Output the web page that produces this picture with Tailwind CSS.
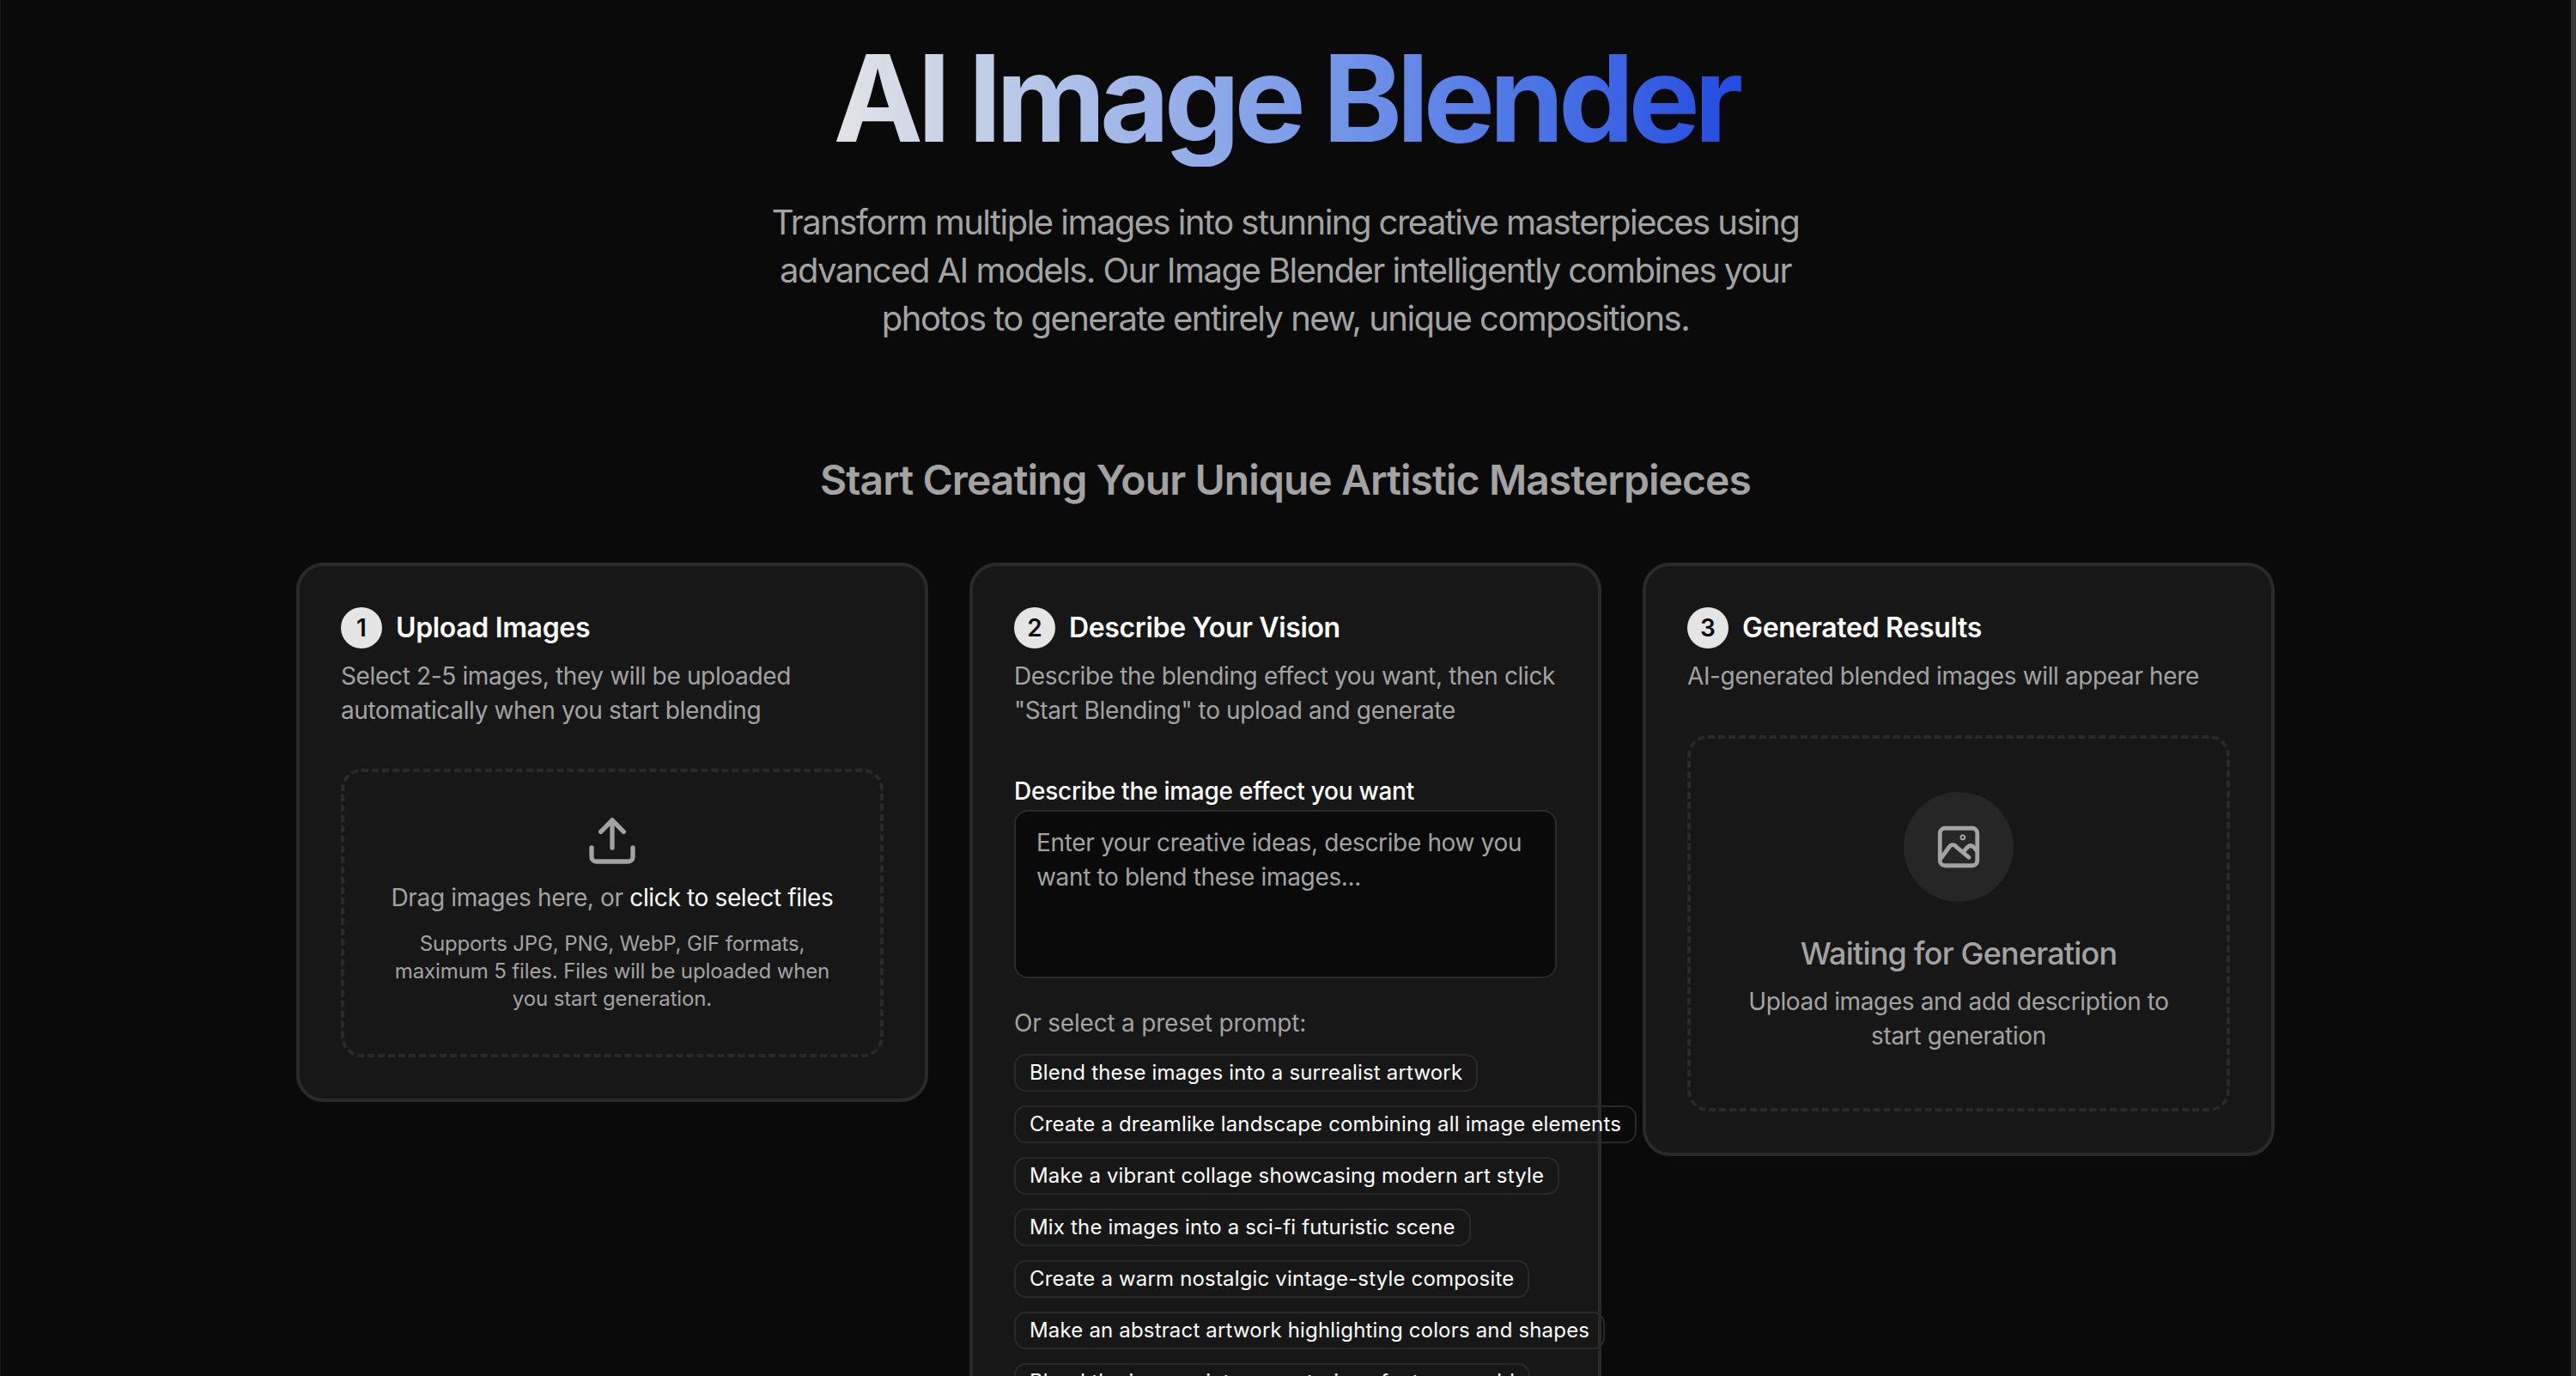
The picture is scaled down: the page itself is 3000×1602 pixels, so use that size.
<!DOCTYPE html>
<html lang="en">
<head>
  <meta charset="UTF-8">
  <title>AI Image Blender</title>
  <script src="https://cdn.jsdelivr.net/npm/@tailwindcss/browser@4"></script>
</head>
<body class="bg-[#0a0a0a] text-white font-['Inter',sans-serif] h-screen overflow-hidden">
  <div class="flex h-[1602px]">
    <main class="flex-1 shadow-[inset_1px_0_0_#1a1a1a] flex flex-col items-center overflow-hidden">
      <!-- Hero -->
      <h1 class="mt-[34px] px-[10px] text-[140px] leading-[160px] font-bold tracking-[-6.7px] bg-gradient-to-r from-[#e5e5e5] to-[#2449e0] bg-clip-text text-transparent">AI Image Blender</h1>
      <p class="mt-[37px] w-[1280px] text-center text-[40px] leading-[56px] tracking-[-1.55px] text-[#a3a3a3]">Transform multiple images into stunning creative masterpieces using advanced AI models. Our Image Blender intelligently combines your photos to generate entirely new, unique compositions.</p>
      <h2 class="mt-[132px] text-[48px] leading-[56px] font-semibold tracking-[-0.93px] text-[#a3a3a3]">Start Creating Your Unique Artistic Masterpieces</h2>

      <!-- Steps -->
      <div class="mt-[68px] w-[2304px] grid grid-cols-3 gap-[48px] items-start">
        <!-- Step 1 -->
        <section class="bg-[#171717] border-4 border-[#2a2a2a] rounded-[32px] p-[48px]">
          <div class="flex items-center gap-[16px]">
            <span class="w-[48px] h-[48px] rounded-full bg-[#e5e5e5] text-[#0a0a0a] text-[28px] font-semibold flex items-center justify-center">1</span>
            <h3 class="text-[32px] leading-[48px] font-semibold tracking-[-0.35px]">Upload Images</h3>
          </div>
          <p class="mt-[12px] text-[28px] leading-[40px] tracking-[-0.35px] text-[#a3a3a3]">Select 2-5 images, they will be uploaded automatically when you start blending</p>
          <div class="mt-[48px] border-4 border-dashed border-[#2a2a2a] rounded-[24px] h-[336px] flex flex-col items-center pt-[48px] px-[40px] text-center">
            <svg class="w-[64px] h-[64px] text-[#a3a3a3]" viewBox="0 0 24 24" fill="none" stroke="currentColor" stroke-width="2" stroke-linecap="round" stroke-linejoin="round"><path d="M21 15v4a2 2 0 0 1-2 2H5a2 2 0 0 1-2-2v-4"/><path d="M17 8l-5-5-5 5"/><path d="M12 3v12"/></svg>
            <p class="mt-[14px] text-[28px] leading-[40px] tracking-[-0.35px] text-[#a3a3a3]">Drag images here, or <span class="text-white">click to select files</span></p>
            <p class="mt-[18px] text-[24px] leading-[32px] tracking-[-0.13px] text-[#a3a3a3]">Supports JPG, PNG, WebP, GIF formats, maximum 5 files. Files will be uploaded when you start generation.</p>
          </div>
        </section>

        <!-- Step 2 -->
        <section class="bg-[#171717] border-4 border-[#2a2a2a] rounded-[32px] p-[48px]">
          <div class="flex items-center gap-[16px]">
            <span class="w-[48px] h-[48px] rounded-full bg-[#e5e5e5] text-[#0a0a0a] text-[28px] font-semibold flex items-center justify-center">2</span>
            <h3 class="text-[32px] leading-[48px] font-semibold tracking-[-0.35px]">Describe Your Vision</h3>
          </div>
          <p class="mt-[12px] text-[28px] leading-[40px] tracking-[-0.35px] text-[#a3a3a3]">Describe the blending effect you want, then click "Start Blending" to upload and generate</p>
          <label class="block mt-[54px] text-[28px] leading-[40px] font-medium tracking-[-0.25px]">Describe the image effect you want</label>
          <div class="mt-[2px] h-[196px] bg-[#0a0a0a] border-2 border-[#2a2a2a] rounded-[16px] px-[24px] pt-[16px] text-[28px] leading-[40px] tracking-[-0.35px] text-[#a3a3a3]">Enter your creative ideas, describe how you want to blend these images...</div>
          <p class="mt-[32px] text-[28px] leading-[40px] tracking-[-0.2px] text-[#a3a3a3]">Or select a preset prompt:</p>
          <div class="mt-[16px] flex flex-col items-start gap-[16px]">
            <button class="h-[44px] px-[16px] whitespace-nowrap border-2 border-[#2a2a2a] rounded-[14px] text-[24px] tracking-[0.17px]">Blend these images into a surrealist artwork</button>
            <button class="h-[44px] px-[16px] whitespace-nowrap border-2 border-[#2a2a2a] rounded-[14px] text-[24px] tracking-[0.17px]">Create a dreamlike landscape combining all image elements</button>
            <button class="h-[44px] px-[16px] whitespace-nowrap border-2 border-[#2a2a2a] rounded-[14px] text-[24px] tracking-[0.17px]">Make a vibrant collage showcasing modern art style</button>
            <button class="h-[44px] px-[16px] whitespace-nowrap border-2 border-[#2a2a2a] rounded-[14px] text-[24px] tracking-[0.17px]">Mix the images into a sci-fi futuristic scene</button>
            <button class="h-[44px] px-[16px] whitespace-nowrap border-2 border-[#2a2a2a] rounded-[14px] text-[24px] tracking-[0.17px]">Create a warm nostalgic vintage-style composite</button>
            <button class="h-[44px] px-[16px] whitespace-nowrap border-2 border-[#2a2a2a] rounded-[14px] text-[24px] tracking-[0.17px]">Make an abstract artwork highlighting colors and shapes</button>
            <button class="h-[44px] px-[16px] whitespace-nowrap border-2 border-[#2a2a2a] rounded-[14px] text-[24px] tracking-[0.17px]">Blend the images into a mysterious fantasy world</button>
          </div>
        </section>

        <!-- Step 3 -->
        <section class="bg-[#171717] border-4 border-[#2a2a2a] rounded-[32px] p-[48px]">
          <div class="flex items-center gap-[16px]">
            <span class="w-[48px] h-[48px] rounded-full bg-[#e5e5e5] text-[#0a0a0a] text-[28px] font-semibold flex items-center justify-center">3</span>
            <h3 class="text-[32px] leading-[48px] font-semibold tracking-[-0.3px]">Generated Results</h3>
          </div>
          <p class="mt-[12px] text-[28px] leading-[40px] tracking-[-0.37px] text-[#a3a3a3]">AI-generated blended images will appear here</p>
          <div class="mt-[49px] border-4 border-dashed border-[#2a2a2a] rounded-[24px] h-[438px] flex flex-col items-center pt-[62px] px-[48px] text-center">
            <div class="w-[128px] h-[128px] rounded-full bg-[#262626] flex items-center justify-center">
              <svg class="w-[58px] h-[58px] text-[#a3a3a3]" viewBox="0 0 24 24" fill="none" stroke="currentColor" stroke-width="2" stroke-linecap="round" stroke-linejoin="round"><rect x="3" y="3" width="18" height="18" rx="2.5"/><circle cx="14" cy="7.4" r="0.4"/><path d="M3.5 17.5 7.5 12c1-1.3 2.4-1.3 3.4 0l6 5"/><path d="M15 13.5l1.3-1.4c1-.9 2-.9 3 0l1.2 1.4"/></svg>
            </div>
            <p class="mt-[36px] text-[36px] leading-[48px] font-medium tracking-[-0.8px] text-[#a3a3a3]">Waiting for Generation</p>
            <p class="mt-[12px] text-[28px] leading-[40px] tracking-[-0.37px] text-[#a3a3a3]">Upload images and add description to start generation</p>
          </div>
        </section>
      </div>
    </main>
    <!-- Scrollbar -->
    <div class="w-[6px] bg-[#3a3a3a]"></div>
  </div>
</body>
</html>
